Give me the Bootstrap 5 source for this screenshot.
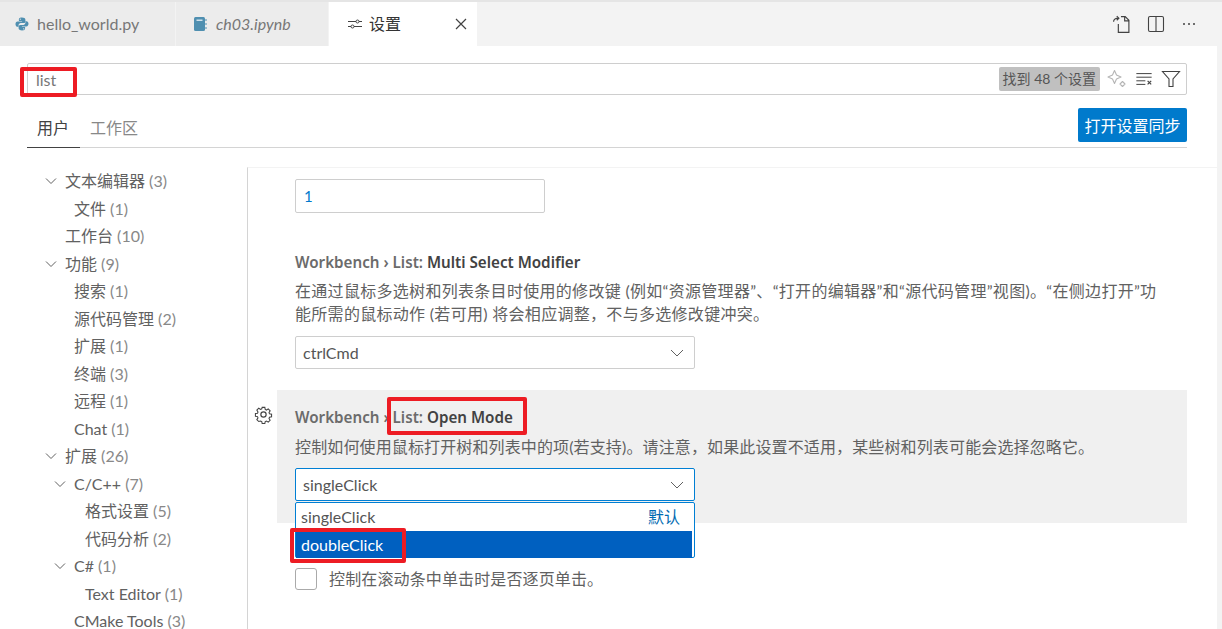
<!DOCTYPE html>
<html lang="zh"><head><meta charset="utf-8"><title>设置</title>
<link href="https://cdn.jsdelivr.net/npm/bootstrap@5.3.0/dist/css/bootstrap.min.css" rel="stylesheet">
<style>
html,body{height:629px;overflow:hidden}
body{font-family:Lato,"Noto Sans CJK SC",sans-serif;font-size:16px;color:#616161;background:#f3f3f3;position:relative;border-top:2px solid #e5e5e5}
.tabbar{height:44px}
.vtab{height:44px;background:#ececec;color:#777;border-right:1px solid #f3f3f3;font-size:16px}
.t1{width:176px;padding-left:14px}.t1 span{margin-left:-1px}.t2{width:153px;padding-left:17px;font-style:italic}.t2 span{margin-left:1px}
.t3{width:149px;background:#fff;color:#333;padding-left:18px}
.tname{margin-left:6px}
.tclose{margin-left:auto;margin-right:8px}
.acts{margin-left:auto;gap:16px;padding-right:25px;color:#424242}
.pane{background:#fff;width:1217px;height:583px;padding:17px 30px 0 27px;display:flex;flex-direction:column}
.searchbox{height:32px;border:1px solid #cecece;border-radius:2px;padding:0 5px 0 8px;flex:none}
.stxt{color:#777;flex:1;padding-top:2px}
.cnt{background:#c0c0c0;color:#555;font-size:14px;border-radius:2px;padding:0 4px;height:24px;line-height:23px;margin-right:7px;white-space:nowrap}
.headrow{height:53px;border-bottom:1px solid #d4d4d4;flex:none;position:relative}
.stab{height:39px;padding:0 10px;color:#888;line-height:39px}
.stab.on{color:#424242;border-bottom:1px solid #424242;margin-bottom:-1px;height:40px;padding:0 11px 0 10px}
.syncbtn{background:#007acc;color:#fff;border:0;border-radius:2px;width:109px;height:34px;font-size:16px;padding:1px 0 0;position:absolute;right:0;top:13px}
.body-row{flex:1;min-height:0;margin-top:19px}
.toc{width:220px;flex:none;color:#616161;padding-top:.5px}
.toc .n{color:#888}
.ti{display:flex;align-items:center;height:27.5px;white-space:nowrap}
.l0{padding-left:38px}.l1{padding-left:47px}.l2{padding-left:58px}
.cv{width:16px;flex:none;margin-left:-22px;margin-right:6px;display:block}
.mainp{flex:1;border-left:1px solid #d4d4d4;border-top:1px solid #f3f3f3;padding-left:47px;margin-right:-30px;position:relative;min-width:0}
.numin{width:250px;height:34px;border:1px solid #cecece;border-radius:2px;margin-top:11px;padding:0 8px;line-height:33px;color:#007acc;font-size:15px}
.stitle{font-family:"Noto Sans","Noto Sans CJK SC",sans-serif;font-size:15.200px;font-weight:600;color:#6b6b6b;line-height:20px}
.stitle b{font-weight:600;color:#424242}
.title-first{margin-top:39px}
.sdesc{line-height:23px;color:#616161;width:862px;letter-spacing:.3px;margin-top:7px}
.sdesc.one{width:auto;letter-spacing:.13px;margin-top:8px}
.sel{width:400px;height:33px;border:1px solid #cecece;border-radius:2px;padding:0 9px 0 7px;background:#fff;color:#555}
.hl{background:#f0f0f0;margin-left:-18px;margin-right:30px;padding:17px 0 0 18px;height:133px;margin-top:21px;position:relative}
.gear{position:absolute;left:-23px;top:15px}
.sel.fo{border-color:#007fd4;margin-top:10px}
.sel.first{margin-top:11px}
.drop{position:absolute;left:18px;top:112px;width:400px;height:56px;background:#fff;border:1px solid #007fd4;border-radius:2px;z-index:2}
.op{height:28px;padding:0 14px 0 5px;color:#555}
.op.sel2{background:#0060c0;color:#fff;margin-right:2px;height:27px}
.dflt{color:#006ab1}
.cbrow{margin-top:44px}
.cbtxt{letter-spacing:.13px;margin-left:4px}
.cb{width:22px;height:22px;border:1px solid #aaa;border-radius:3px;flex:none;background:#fff}
.sb{position:absolute;z-index:3;border:4px solid #ed1c24;border-radius:2px;pointer-events:none}
.s1{left:20px;top:65px;width:57px;height:30px}
.s2{left:387px;top:395px;width:140px;height:38px}
.s3{left:290px;top:526px;width:116px;height:35px}
</style></head><body>
<div class="tabbar d-flex align-items-center">
 <div class="vtab t1 d-flex align-items-center gap-2">
  <svg width="16" height="16" viewBox="0 0 16 16"><path fill="#4f8fb0" d="M7.900 1.500c-3 0-3 1.300-3 2.400v1.200h3.200v.5H3.600C2.300 5.600 1.500 6.700 1.500 8.200s.9 2.600 2 2.600h1.100V9.300c0-1.200 1-2.200 2.200-2.200h2.900c1 0 1.700-.8 1.700-1.700V3.700c0-1.300-1.300-2.200-3.500-2.200zM6.300 2.600a.6.6 0 1 1 0 1.200.6.6 0 0 1 0-1.200z"/><path fill="#4f8fb0" d="M8.100 14.500c3 0 3-1.300 3-2.400v-1.200H7.900v-.5h4.500c1.300 0 2.100-1.100 2.100-2.600s-.9-2.600-2-2.600h-1.100v1.500c0 1.200-1 2.200-2.200 2.200H6.300c-1 0-1.700.8-1.700 1.700v1.700c0 1.300 1.300 2.200 3.500 2.200zm1.600-1.100a.6.6 0 1 1 0-1.200.6.6 0 0 1 0 1.200z"/></svg>
  <span>hello_world.py</span></div>
 <div class="vtab t2 d-flex align-items-center gap-2">
  <svg width="14" height="16" viewBox="0 0 14 16"><rect x="1" y="1" width="11" height="14" rx="1.500" fill="#4f8fb0"/><rect x="3.500" y="3.500" width="6" height="1.500" fill="#cfe2ec"/><path stroke="#4f8fb0" d="M13 3v2M13 7v2M13 11v2"/></svg>
  <span>ch03.ipynb</span></div>
 <div class="vtab t3 d-flex align-items-center">
  <svg width="16" height="16" viewBox="0 0 16 16" fill="none" stroke="#424242"><path d="M1 5.500h8M12 5.500h3M1 10.500h3M7 10.500h8"/><circle cx="10.500" cy="5.500" r="1.500"/><circle cx="5.500" cy="10.500" r="1.500"/></svg>
  <span class="tname">设置</span>
  <svg class="tclose" width="16" height="16" viewBox="0 0 16 16" stroke="#424242" stroke-width="1.200"><path d="M3 3l10 10M13 3L3 13"/></svg></div>
 <div class="acts d-flex align-items-center">
  <svg width="19" height="19" viewBox="0 0 18 18" fill="none" stroke="#424242" stroke-width="1.100"><path d="M6 8.500V16.500H16V5L12.500 1.500H8.500M12 1.500V5.500H16M1.500 6.500c0-2 1.500-3.500 4.500-3.500M4.500 1L6.500 3 4.500 5"/></svg>
  <svg width="18" height="18" viewBox="0 0 18 18" fill="none" stroke="#424242" stroke-width="1.100"><rect x="1.500" y="1.500" width="15" height="15" rx="1.500"/><path d="M9 1.500v15"/></svg>
  <svg width="16" height="16" viewBox="0 0 16 16" fill="#424242"><circle cx="3" cy="8" r="1"/><circle cx="8" cy="8" r="1"/><circle cx="13" cy="8" r="1"/></svg>
 </div>
</div>
<div class="pane">
 <div class="searchbox d-flex align-items-center">
  <span class="stxt">list</span>
  <span class="cnt">找到 48 个设置</span>
  <svg width="20" height="20" viewBox="0 0 20 20" fill="none" stroke="#b5b5b5" stroke-width="1.100" stroke-linejoin="round" class="me-2"><path d="M7.500 1.500L9.500 6 14 8l-4.500 2-2 4.500-2-4.500L1 8l4.500-2z"/><path d="M15.500 12.500l2.500 2.500-2.500 2.500L13 15z"/></svg>
  <svg width="18" height="18" viewBox="0 0 20 20" fill="none" stroke="#424242" stroke-width="1.100" class="me-2"><path d="M1.500 4h17M1.500 8h17M1.500 12h10M1.500 16h10"/><path d="M14 12l4 4M18 12l-4 4" stroke-width="1.300"/></svg>
  <svg width="20" height="20" viewBox="0 0 20 20" fill="none" stroke="#424242" stroke-width="1.100"><path d="M1.500 2.500h17L12 10v7.500H8V10z"/></svg>
 </div>
 <div class="headrow d-flex align-items-end">
  <div class="stab on">用户</div><div class="stab">工作区</div>
  <button class="syncbtn">打开设置同步</button>
 </div>
 <div class="body-row d-flex">
  <div class="toc">
   <div class="ti l0"><svg class="cv" width="16" height="16" viewBox="0 0 16 16" fill="none" stroke="#616161"><path d="M3 5.500l5 5 5-5"/></svg>文本编辑器&nbsp;<span class="n">(3)</span></div>
   <div class="ti l1">文件&nbsp;<span class="n">(1)</span></div>
   <div class="ti l0">工作台&nbsp;<span class="n">(10)</span></div>
   <div class="ti l0"><svg class="cv" width="16" height="16" viewBox="0 0 16 16" fill="none" stroke="#616161"><path d="M3 5.500l5 5 5-5"/></svg>功能&nbsp;<span class="n">(9)</span></div>
   <div class="ti l1">搜索&nbsp;<span class="n">(1)</span></div>
   <div class="ti l1">源代码管理&nbsp;<span class="n">(2)</span></div>
   <div class="ti l1">扩展&nbsp;<span class="n">(1)</span></div>
   <div class="ti l1">终端&nbsp;<span class="n">(3)</span></div>
   <div class="ti l1">远程&nbsp;<span class="n">(1)</span></div>
   <div class="ti l1">Chat&nbsp;<span class="n">(1)</span></div>
   <div class="ti l0"><svg class="cv" width="16" height="16" viewBox="0 0 16 16" fill="none" stroke="#616161"><path d="M3 5.500l5 5 5-5"/></svg>扩展&nbsp;<span class="n">(26)</span></div>
   <div class="ti l1"><svg class="cv" width="16" height="16" viewBox="0 0 16 16" fill="none" stroke="#616161"><path d="M3 5.500l5 5 5-5"/></svg>C/C++&nbsp;<span class="n">(7)</span></div>
   <div class="ti l2">格式设置&nbsp;<span class="n">(5)</span></div>
   <div class="ti l2">代码分析&nbsp;<span class="n">(2)</span></div>
   <div class="ti l1"><svg class="cv" width="16" height="16" viewBox="0 0 16 16" fill="none" stroke="#616161"><path d="M3 5.500l5 5 5-5"/></svg>C#&nbsp;<span class="n">(1)</span></div>
   <div class="ti l2">Text Editor&nbsp;<span class="n">(1)</span></div>
   <div class="ti l1">CMake Tools&nbsp;<span class="n">(3)</span></div>
  </div>
  <div class="mainp">
   <div class="numin">1</div>
   <div class="stitle title-first">Workbench › List: <b>Multi Select Modifier</b></div>
   <div class="sdesc">在通过鼠标多选树和列表条目时使用的修改键 (例如“资源管理器”、“打开的编辑器”和“源代码管理”视图)。“在侧边打开”功能所需的鼠标动作 (若可用) 将会相应调整，不与多选修改键冲突。</div>
   <div class="sel first d-flex align-items-center justify-content-between"><span>ctrlCmd</span><svg width="16" height="16" viewBox="0 0 16 16" fill="none" stroke="#616161"><path d="M2 5l6 6 6-6"/></svg></div>
   <div class="hl">
    <svg class="gear" width="19" height="19" viewBox="0 0 18 18" fill="none" stroke="#424242" stroke-width="1.100"><circle cx="9" cy="9" r="2.500"/><path d="M7.600 1.500h2.800l.4 2.200 1.300.6 1.900-1.200 2 2-1.200 1.900.5 1.300 2.200.4v2.800l-2.200.4-.5 1.300 1.200 1.900-2 2-1.900-1.200-1.300.5-.4 2.200H7.600l-.4-2.200-1.300-.5L4 16.400l-2-2 1.200-1.900-.5-1.300-2.200-.4V8l2.200-.4.500-1.300L2 4.400l2-2 1.900 1.200 1.300-.6z" transform="translate(.9 .9) scale(.9)"/></svg>
    <div class="stitle">Workbench › List: <b>Open Mode</b></div>
    <div class="sdesc one">控制如何使用鼠标打开树和列表中的项(若支持)。请注意，如果此设置不适用，某些树和列表可能会选择忽略它。</div>
    <div class="sel fo d-flex align-items-center justify-content-between"><span>singleClick</span><svg width="16" height="16" viewBox="0 0 16 16" fill="none" stroke="#616161"><path d="M2 5l6 6 6-6"/></svg></div>
    <div class="drop">
     <div class="op d-flex align-items-center justify-content-between"><span>singleClick</span><span class="dflt">默认</span></div>
     <div class="op sel2 d-flex align-items-center"><span>doubleClick</span></div>
    </div>
   </div>
   <div class="d-flex align-items-center gap-2 cbrow"><span class="cb"></span><span class="cbtxt">控制在滚动条中单击时是否逐页单击。</span></div>
  </div>
 </div>
</div>
<div class="sb s1"></div><div class="sb s2"></div><div class="sb s3"></div>
</body></html>
